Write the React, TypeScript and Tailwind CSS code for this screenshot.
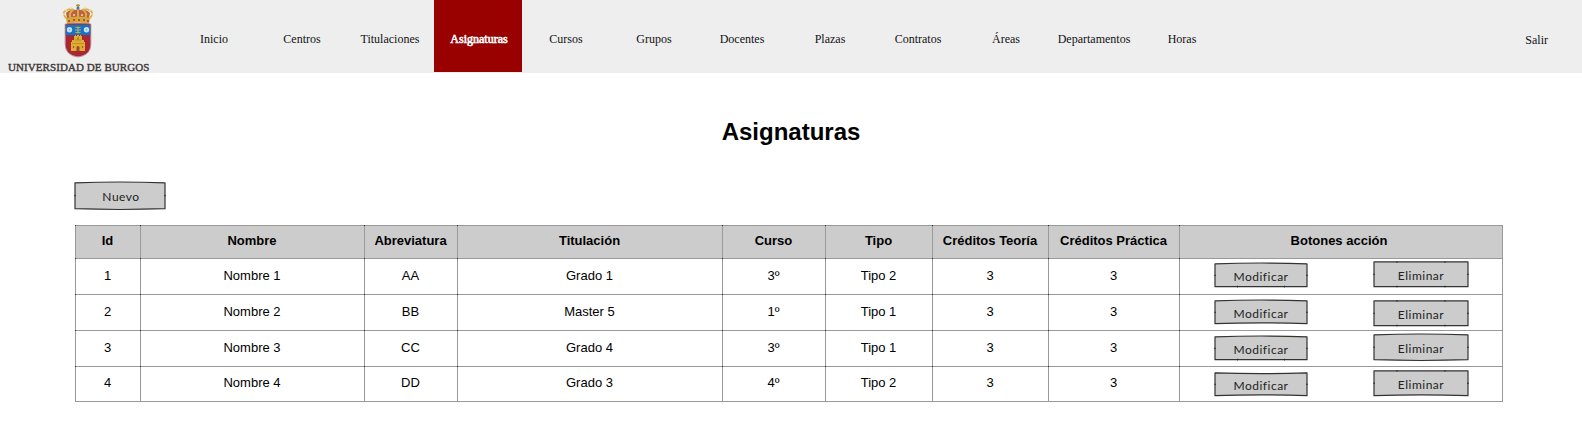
const navItems = [
  "Inicio", "Centros", "Titulaciones", "Asignaturas", "Cursos", "Grupos",
  "Docentes", "Plazas", "Contratos", "Áreas", "Departamentos", "Horas",
];

const headings = [
  "Id", "Nombre", "Abreviatura", "Titulación", "Curso", "Tipo",
  "Créditos Teoría", "Créditos Práctica", "Botones acción",
];

type Edge = { top: number; bottom: number };
type Row = { cells: string[]; height: string; edit: Edge; remove: Edge; editOffset: string; removeOffset: string };

const rows: Row[] = [
  { cells: ["1", "Nombre 1", "AA", "Grado 1", "3º", "Tipo 2", "3", "3"], height: "h-9", edit: { top: -1, bottom: 0 }, remove: { top: 0, bottom: 0 }, editOffset: "mt-1", removeOffset: "mt-[2px]" },
  { cells: ["2", "Nombre 2", "BB", "Master 5", "1º", "Tipo 1", "3", "3"], height: "h-9", edit: { top: -1, bottom: -1 }, remove: { top: 0, bottom: 0 }, editOffset: "mt-[5px]", removeOffset: "mt-[5px]" },
  { cells: ["3", "Nombre 3", "CC", "Grado 4", "3º", "Tipo 1", "3", "3"], height: "h-9", edit: { top: -1, bottom: 0 }, remove: { top: -1, bottom: 1 }, editOffset: "mt-[5px]", removeOffset: "mt-[3px]" },
  { cells: ["4", "Nombre 4", "DD", "Grado 3", "4º", "Tipo 2", "3", "3"], height: "h-[35px]", edit: { top: 1, bottom: -1 }, remove: { top: 0, bottom: -1 }, editOffset: "mt-[5px]", removeOffset: "mt-[3px]" },
];

const columns = "grid grid-cols-[65px_224px_93px_265px_103px_107px_116px_131px_324px]";

function Crest() {
  return (
    <svg className="h-[54px] w-8 shrink-0" viewBox="0 0 32 54">
      <path d="M5 14 4 9Q8 5 14 6L16 4l2 2q6-1 10 3l-1 5Z" fill="#c0603c" />
      <path d="M5 15Q-1 9 4 6.500Q9 4 12 6M27 15q6-6 1-8.500Q23 4 20 6M9 15Q6 9 11 6M23 15q3-6-2-9M16 15V5" fill="none" stroke="#d9b24c" strokeWidth="1.800" />
      <path d="M4 14q12-3 24 0l-1 6q-11-3-22 0Z" fill="#d4a63e" />
      <path d="M16 0v4M14 1.500h4" stroke="#b8953c" strokeWidth="1.400" />
      <circle cx="16" cy="4" r="1.500" fill="#3c78ac" />
      <g fill="#f1dfa6">
        <circle cx="2" cy="10" r="1" /><circle cx="4" cy="6" r="1" /><circle cx="9" cy="4" r="1" />
        <circle cx="23" cy="4" r="1" /><circle cx="28" cy="6" r="1" /><circle cx="30" cy="10" r="1" />
        <circle cx="12" cy="11" r="1" /><circle cx="20" cy="11" r="1" />
      </g>
      <path d="M6 17h2m3-1h2m3 0h2m3 0h2m2 1h2" stroke="#a33a35" strokeWidth="1.500" />
      <path d="M3.500 20q12.500-1.500 25 0v20q0 11-12.500 12.500Q3.500 51 3.500 40Z" fill="#a92636" />
      <path d="M3.500 21q12.500-1 25 0v10h-25Z" fill="#1672c3" />
      <path d="M3.200 20q12.800-1.500 25.600 0v20q0 11.500-12.800 13Q3.200 51.500 3.200 40Z" fill="none" stroke="#a9656b" strokeWidth=".7" />
      <g fill="#c9e0ef"><circle cx="7.500" cy="25.800" r="2.700" /><circle cx="24.500" cy="25.800" r="2.700" /></g>
      <g fill="#80aed0"><circle cx="7.500" cy="25.800" r=".8" /><circle cx="24.500" cy="25.800" r=".8" /></g>
      <path d="M16 22.500v7M13 26h6M13.500 23.500h5M13.500 28.500h5" stroke="#b9b04c" strokeWidth="1.200" />
      <path d="M9 47v-9h1v-2h2v-4h1v-1h1v1h1v-1h2v1h1v-1h1v1h1v4h2v2h1v9Z" fill="#dfae30" />
      <path d="M10 39.500h12M13 36h6" stroke="#b57d29" strokeWidth=".7" />
      <path d="M11.500 42v2M20.500 42v2M16 33.500v2" stroke="#a65c2a" strokeWidth="1.200" />
      <path d="M14.500 47v-4q1.500-2 3 0v4Z" fill="#9a4a2a" />
    </svg>
  );
}

function SketchButton({ label, width, height, edge, className }: { label: string; width: number; height: number; edge: Edge; className: string }) {
  const l = 1;
  const r = width - 1;
  const t = 0.8;
  const b = height - 2.3;
  const mid = (t + b) / 2;
  const outline = `M${l} ${t}Q${width / 2} ${t + edge.top * 1.6} ${r} ${t}V${b}Q${width / 2} ${b + edge.bottom * 1.6} ${l} ${b}Z`;
  return (
    <button className={`relative block shrink-0 text-center font-['Lato',sans-serif] text-[12px] tracking-[0.5px] text-[#222] ${className}`}>
      <svg className="absolute inset-0 overflow-visible" width={width} height={height} viewBox={`0 0 ${width} ${height}`}>
        <path d={outline} fill="#ccc" stroke="#333" strokeWidth="1.2" strokeLinejoin="round" />
        <path d={`M0 ${mid}h2M${width - 2} ${mid}h2`} stroke="#222" strokeWidth=".8" />
        {edge.top === 0 && <path d={`M${width / 4} ${t - 0.7}v1.800M${(width * 3) / 4} ${t - 0.7}v1.800`} stroke="#222" strokeWidth=".8" />}
        {edge.bottom === 0 && <path d={`M${width / 4} ${b - 1}v1.800M${(width * 3) / 4} ${b - 1}v1.800`} stroke="#222" strokeWidth=".8" />}
      </svg>
      <span className="relative">{label}</span>
    </button>
  );
}

const cell = "relative flex justify-center border-l border-t border-[#999] last:border-r before:absolute before:-left-px before:-top-px before:size-px before:bg-[#333]";

export default function App() {
  return (
    <div className="h-[429px] w-[1582px] overflow-hidden bg-white font-['Liberation_Sans',Arial,sans-serif] text-black">
      <header className="flex h-[73px] bg-[#eee] font-['Liberation_Serif',serif] text-[12px]">
        <div className="flex w-[170px] flex-col pt-1">
          <div className="pl-[62px]"><Crest /></div>
          <div className="pl-2 pt-[3px] text-[11px] leading-3 tracking-[0.07px] whitespace-nowrap text-[#403838] [-webkit-text-stroke:0.4px_#403838]">UNIVERSIDAD DE BURGOS</div>
        </div>
        <nav className="flex">
          {navItems.map((item) => (
            <a key={item} className={`flex h-[72px] w-[88px] justify-center pt-8 leading-[14px] ${item === "Asignaturas" ? "bg-[#990000] pl-[2px] text-white [-webkit-text-stroke:0.6px_white]" : "text-[#111]"}`}>{item}</a>
          ))}
        </nav>
        <a className="ml-auto pr-[34px] pt-[33px] leading-[14px] text-[#111]">Salir</a>
      </header>
      <main className="pl-[74px]">
        <h1 className="w-[1434px] pt-[45px] text-center text-[24px] leading-[28px] font-bold">Asignaturas</h1>
        <div className="pt-9">
          <SketchButton label="Nuevo" width={92} height={29} edge={{ top: -1, bottom: 1 }} className="h-[29px] w-[92px] pl-[2px] leading-[29px]" />
        </div>
        <div className="ml-px mt-[14px] w-[1428px] border-b border-[#999] text-[13px]">
          <div className={`${columns} h-[33px] bg-[#ccc] font-bold`}>
            {headings.map((h) => (
              <div key={h} className={`${cell} pt-[7px] pr-px leading-[15px] last:pr-1`}>{h}</div>
            ))}
          </div>
          {rows.map((row) => (
            <div key={row.cells[0]} className={`${columns} ${row.height}`}>
              {row.cells.map((value, i) => (
                <div key={i} className={`${cell} ${row.height === "h-9" ? "pt-[9px]" : "pt-2"} pr-px leading-[15px]`}>{value}</div>
              ))}
              <div className={`${cell} items-start gap-[65px] pl-px`}>
                <SketchButton label="Modificar" width={94} height={26} edge={row.edit} className={`h-[26px] w-[94px] leading-[27px] ${row.editOffset}`} />
                <SketchButton label="Eliminar" width={96} height={28} edge={row.remove} className={`h-7 w-24 leading-[29px] ${row.removeOffset}`} />
              </div>
            </div>
          ))}
        </div>
      </main>
    </div>
  );
}
